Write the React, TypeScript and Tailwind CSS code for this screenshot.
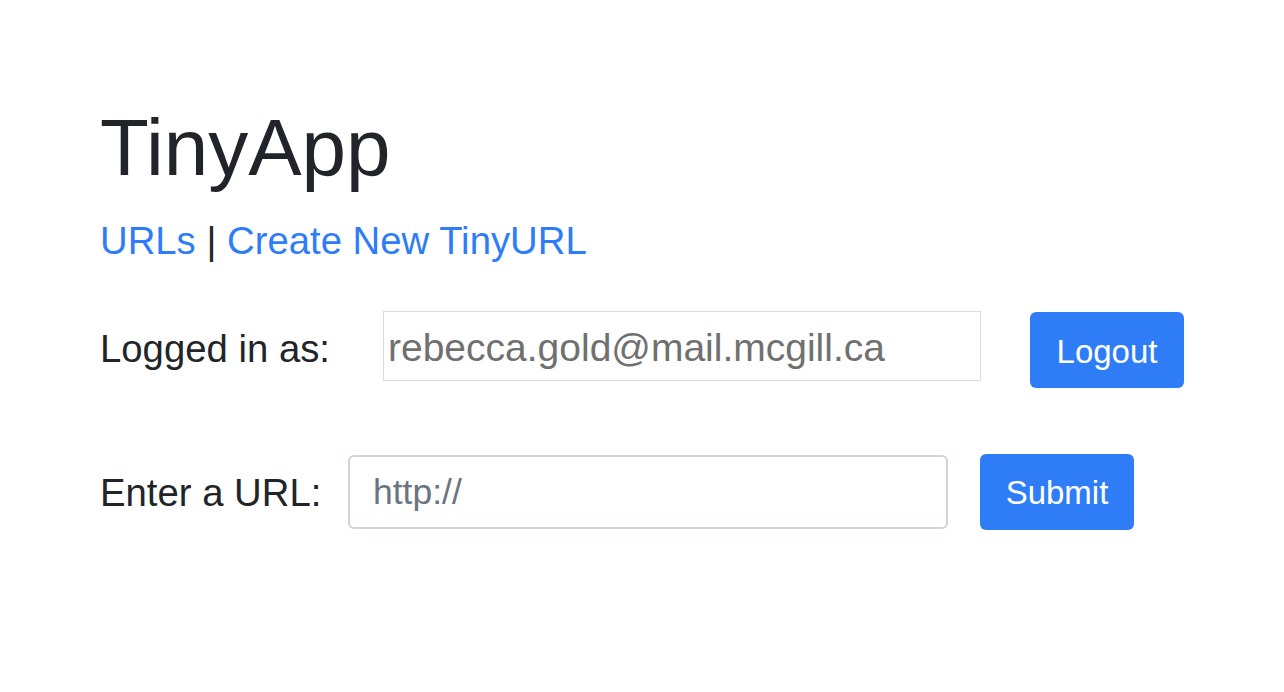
import React from "react";

export default function App() {
  return (
    <div
      className="min-h-[692px] w-full bg-white pl-[100px] pt-[100px] text-[#212529]"
      style={{ fontFamily: '"Liberation Sans", Arial, sans-serif' }}
    >
      <h1 className="text-[80px] leading-[1.2] font-normal">TinyApp</h1>
      <div className="mt-[16px] text-[38.3px] leading-[1.5]">
        <a href="#" className="text-[#2f7df6]">URLs</a>
        <span> | </span>
        <a href="#" className="text-[#2f7df6]">Create New TinyURL</a>
      </div>

      <div className="mt-[42px] flex items-start">
        <label className="mt-[9px] w-[283px] shrink-0 text-[38.3px] leading-[1.5]">Logged in as:</label>
        <input
          readOnly
          value="rebecca.gold@mail.mcgill.ca"
          className="h-[70px] w-[598px] border border-[#dcdcdc] bg-white pl-[4px] pr-[4px] pt-[3px] text-[39px] text-[#707070] outline-none"
        />
        <button className="ml-[49px] mt-[1px] h-[76px] w-[154px] rounded-[6px] bg-[#2f7df6] pt-[2px] text-[33px] text-white">
          Logout
        </button>
      </div>

      <div className="mt-[66px] flex items-start">
        <label className="mt-[10px] w-[248px] shrink-0 text-[38.3px] leading-[1.5]">Enter a URL:</label>
        <input
          placeholder="http://"
          className="mt-[1px] h-[74px] w-[600px] rounded-[6px] border-2 border-[#ced4da] bg-white px-[23px] text-[35.5px] text-[#212529] placeholder:text-[#6c757d] outline-none"
        />
        <button className="ml-[32px] h-[76px] w-[154px] rounded-[6px] bg-[#2f7df6] text-[33px] text-white">
          Submit
        </button>
      </div>
    </div>
  );
}
